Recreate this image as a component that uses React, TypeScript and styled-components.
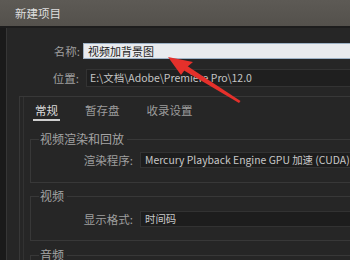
import styled, {createGlobalStyle} from "styled-components";

const GlobalStyle = createGlobalStyle`
  html, body {
    margin: 0;
    padding: 0;
    background: #262626;
  }
  body {
    font-family: "Noto Sans CJK SC", "Noto Sans", sans-serif;
    font-size: 11px;
    color: #b0b0b0;
  }
`

const Window = styled.div`
  position: relative;
  width: 350px;
  height: 260px;
  overflow: hidden;
  display: flex;
  flex-direction: column;
  background: #262626;
`

const TitleBar = styled.div`
  flex-shrink: 0;
  height: 26px;
  line-height: 27px;
  padding-left: 15px;
  font-size: 11.5px;
  color: #dedede;
  background: linear-gradient(#5d5a55, #54514c);
  border-bottom: 2px solid #1d1d1d;
`

const Body = styled.div`
  flex: 1;
  display: flex;
  min-height: 0;
`

const SideStrip = styled.div`
  width: 6px;
  flex-shrink: 0;
  background: #1a1a1a;
  border-right: 1px solid #363636;
`

const Content = styled.div`
  flex: 1;
  padding-top: 15px;
  display: flex;
  flex-direction: column;
`

const FormRow = styled.div<{ $gap?: number }>`
  display: flex;
  align-items: center;
  margin-top: ${(p) => p.$gap ?? 0}px;
`

const Label = styled.div<{ $width: number }>`
  width: ${(p) => p.$width}px;
  flex-shrink: 0;
  text-align: right;
  color: #9e9e9e;
  font-size: 11.5px;
`

const NameInput = styled.div`
  flex: 1;
  height: 14px;
  line-height: 14px;
  margin-left: 3px;
  padding-left: 4px;
  background: #e9ebee;
  border: 1px solid #9db2c6;
  border-right: none;
  color: #1b1b1b;
  font-size: 11px;
`

const PathBox = styled.div`
  flex: 1;
  height: 16px;
  line-height: 16px;
  margin-left: 7px;
  padding-left: 3px;
  background: #1f1f1f;
  border: 1px solid #333;
  border-right: none;
  color: #c4c4c4;
  font-size: 10.5px;
  white-space: nowrap;
  overflow: hidden;
`

const Panel = styled.div`
  margin: 9px -40px 0 12px;
  border: 1px solid #383838;
  box-shadow: inset 3px 0 0 0 #262626, inset 4px 0 0 0 #323232;
  padding-left: 4px;
  flex: 1;
`

const Tabs = styled.div`
  display: flex;
  gap: 23px;
  padding: 5px 0 0 9px;
`

const Tab = styled.div<{ $active?: boolean }>`
  height: 17px;
  line-height: 17px;
  padding: 0 2px;
  font-size: 11.5px;
  color: ${(p) => p.$active ? '#dadada' : '#9c9c9c'};
  border-bottom: 2px solid ${(p) => p.$active ? '#cfcfcf' : 'transparent'};
`

const Group = styled.fieldset<{ $top: number; $bottom: number; $mt: number }>`
  margin: ${(p) => p.$mt}px 0 0 6px;
  padding: ${(p) => p.$top}px 0 ${(p) => p.$bottom}px 8px;
  border: 1px solid #383838;
  min-width: 0;
`

const Legend = styled.legend`
  padding: 0 3px 0 1px;
  line-height: 16px;
  font-size: 12px;
  color: #a4a4a4;
`

const Select = styled.div`
  flex: 1;
  height: 14px;
  line-height: 14px;
  margin-left: 7px;
  padding-left: 4px;
  background: #1d1d1d;
  border: 1px solid #323232;
  border-right: none;
  color: #c8c8c8;
  font-size: 10.4px;
  white-space: nowrap;
  overflow: hidden;
`

const Arrow = styled.svg`
  position: absolute;
  left: 0;
  top: 0;
  pointer-events: none;
`

const App = () => {
    return (
        <Window>
            <GlobalStyle/>
            <TitleBar>新建项目</TitleBar>
            <Body>
                <SideStrip/>
                <Content>
                    <FormRow>
                        <Label $width={73}>名称:</Label>
                        <NameInput>视频加背景图</NameInput>
                    </FormRow>
                    <FormRow $gap={10}>
                        <Label $width={72}>位置:</Label>
                        <PathBox>E:\文档\Adobe\Premiere Pro\12.0</PathBox>
                    </FormRow>
                    <Panel>
                        <Tabs>
                            <Tab $active>常规</Tab>
                            <Tab>暂存盘</Tab>
                            <Tab>收录设置</Tab>
                        </Tabs>
                        <Group $mt={10} $top={5} $bottom={14}>
                            <Legend>视频渲染和回放</Legend>
                            <FormRow>
                                <Label $width={94}>渲染程序:</Label>
                                <Select>Mercury Playback Engine GPU 加速 (CUDA)</Select>
                            </FormRow>
                        </Group>
                        <Group $mt={5} $top={7} $bottom={13}>
                            <Legend>视频</Legend>
                            <FormRow>
                                <Label $width={94}>显示格式:</Label>
                                <Select>时间码</Select>
                            </FormRow>
                        </Group>
                        <Group $mt={6} $top={6} $bottom={14}>
                            <Legend>音频</Legend>
                        </Group>
                    </Panel>
                </Content>
            </Body>
            <Arrow width="350" height="260" viewBox="0 0 350 260">
                <polygon points="168,57 193,62 186.5,67.5 181,75" fill="#e5302b"/>
                <polygon points="186.5,65.5 240.5,101 239,103 184,70.5" fill="#e5302b"/>
            </Arrow>
        </Window>
    )
}

export default App
